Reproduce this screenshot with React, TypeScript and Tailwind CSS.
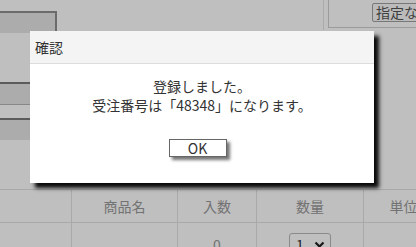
import React from 'react'

const FONT = { fontFamily: '"Noto Sans CJK JP", "Noto Sans", sans-serif' }

const HEADERS = ['', '商品名', '入数', '数量', '単位']

export default function App() {
    return (
        <div
            className="relative w-[416px] h-[247px] overflow-hidden bg-white text-[14px] text-[#333]"
            style={FONT}
        >
            {/* Page behind the dialog */}
            <div className="flex h-[189px]">
                <div className="w-[57px] flex flex-col">
                    <div className="mt-[11px] h-[22px] border-t-2 border-r-2 border-[#8f8f8f] bg-[#e6e6e6]" />
                    <div className="mt-[49px] h-[23px] border-t-2 border-b border-t-[#7a7a7a] border-b-[#b5b5b5] bg-[#e6e6e6]" />
                    <div className="mt-[13px] h-[22px] border-t-2 border-[#7a7a7a] bg-[#e6e6e6]" />
                </div>
                <div className="flex-1" />
                <div className="w-[93px] h-[30px] border-l border-[#e4e4e4] pl-[4px] flex">
                    <div className="flex-1 h-[28px] border-l border-b border-[#cfcfcf] pl-[43px] pt-[3px] overflow-hidden">
                        <div className="h-[19px] w-[60px] px-[3px] border border-[#a0a0a0] rounded-[2px] bg-[#fafafa] text-[#555] leading-[17px] whitespace-nowrap">
                            指定なし
                        </div>
                    </div>
                </div>
            </div>

            {/* Items table */}
            <div className="border-t border-[#e2e2e2]">
                <div className="grid grid-cols-[72px_106px_79px_107px_80px] h-[33px] border-b border-[#e2e2e2]">
                    {HEADERS.map((h, i) => (
                        <div
                            key={i}
                            className="flex items-center justify-center border-r border-[#e2e2e2] text-[#999] whitespace-nowrap"
                        >
                            {h}
                        </div>
                    ))}
                </div>
                <div className="grid grid-cols-[72px_106px_79px_107px_80px] h-[40px]">
                    <div className="border-r border-[#e2e2e2]" />
                    <div className="border-r border-[#e2e2e2]" />
                    <div className="border-r border-[#e2e2e2] text-center pt-[11px] leading-[20px] text-[#999]">0</div>
                    <div className="border-r border-[#e2e2e2] flex justify-center pt-[10px]">
                        <div className="w-[42px] h-[22px] border border-[#b8b8b8] rounded-[3px] flex items-center justify-between pl-[6px] pr-[5px] text-[#333]">
                            <span className="leading-[20px]">1</span>
                            <svg width="11" height="8" viewBox="0 0 11 8" className="mt-[2px]">
                                <path d="M1.5 1.5 L5.5 5.5 L9.5 1.5" fill="none" stroke="#222" strokeWidth="2.2" />
                            </svg>
                        </div>
                    </div>
                    <div />
                </div>
            </div>

            {/* Modal overlay */}
            <div className="absolute inset-0 bg-black/25" />

            {/* Dialog */}
            <div className="absolute left-[30px] top-[31px] w-[344px] h-[152px] bg-white shadow-[5px_5px_4px_rgba(0,0,0,0.95)] flex flex-col">
                <div className="h-[33px] bg-[#f4f4f4] border-b border-[#dcdcdc] flex items-center pl-[5px] text-[#333]">
                    確認
                </div>
                <div className="pt-[13px] text-center leading-[19px] text-[#333]">
                    <p>登録しました。</p>
                    <p>受注番号は「48348」になります。</p>
                </div>
                <div className="flex justify-center pr-[9px] mt-[24px]">
                    <button className="w-[58px] h-[18px] border border-[#666] bg-white text-[#333] leading-[16px] shadow-[3px_3px_3px_rgba(0,0,0,0.55)]">
                        OK
                    </button>
                </div>
            </div>
        </div>
    )
}
